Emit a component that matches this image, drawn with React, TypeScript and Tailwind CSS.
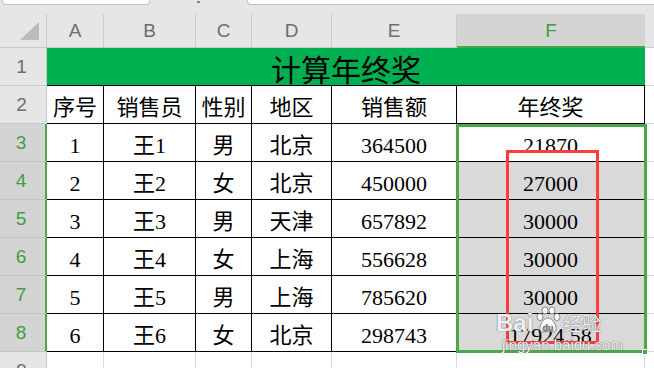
import React from "react";

const COLS = ["A", "B", "C", "D", "E", "F"];
const ROWS: string[][] = [
  ["序号", "销售员", "性别", "地区", "销售额", "年终奖"],
  ["1", "王1", "男", "北京", "364500", "21870"],
  ["2", "王2", "女", "北京", "450000", "27000"],
  ["3", "王3", "男", "天津", "657892", "30000"],
  ["4", "王4", "女", "上海", "556628", "30000"],
  ["5", "王5", "男", "上海", "785620", "30000"],
  ["6", "王6", "女", "北京", "298743", "17924.58"],
];

function RowHead({ n, active }: { n: number; active: boolean }) {
  return (
    <div
      className={
        active
          ? "flex items-center justify-center bg-[#d4d4d4] border-b border-b-[#c4c4c4] border-r-2 border-r-[#4aa84a] text-[#3f9f3f] text-[19px] font-['Liberation_Sans',sans-serif] leading-none pr-[3px]"
          : "flex items-center justify-center bg-[#e6e6e6] border-b border-r border-[#c9c9c9] text-[#6e6e6e] text-[19px] font-['Liberation_Sans',sans-serif] leading-none pr-[3px]"
      }
    >
      {n}
    </div>
  );
}

function ColHead({ label, active }: { label: string; active: boolean }) {
  return (
    <div
      className={
        active
          ? "flex items-center justify-center bg-[#d4d4d4] border-b-2 border-b-[#4aa84a] text-[#3f9f3f] text-[19px] font-['Liberation_Sans',sans-serif] leading-none"
          : "flex items-center justify-center bg-[#e6e6e6] border-r border-b border-[#cbcbcb] text-[#6e6e6e] text-[19px] font-['Liberation_Sans',sans-serif] leading-none"
      }
    >
      {label}
    </div>
  );
}

function DataCell({ text, shaded }: { text: string; shaded: boolean }) {
  return (
    <div
      className={
        shaded
          ? "flex items-center justify-center pt-[6px] bg-[#d9d9d9] border-r border-b border-black text-black text-[22px] leading-none font-['Liberation_Serif','Noto_Sans_CJK_SC',serif]"
          : "flex items-center justify-center pt-[6px] bg-white border-r border-b border-black text-black text-[22px] leading-none font-['Liberation_Serif','Noto_Sans_CJK_SC',serif]"
      }
    >
      {text}
    </div>
  );
}

function Blank() {
  return <div className="bg-white border-r border-b border-[#d9d9d9]" />;
}

function Watermark() {
  return (
    <div className="absolute left-[496px] top-[299px] w-[130px] h-[58px] pointer-events-none select-none text-white/90 [text-shadow:0_0_1px_#6f6f6f,0_0_1px_#6f6f6f]">
      <div className="flex items-end gap-[2px] font-['Liberation_Sans',sans-serif]">
        <span className="text-[24px] font-bold leading-none mt-[12px]">Bai</span>
        <svg width="26" height="28" viewBox="0 0 26 28" className="mb-[1px]">
          <g fill="rgba(255,255,255,0.9)" stroke="rgba(100,100,100,0.8)" strokeWidth="0.9">
            <ellipse cx="5" cy="11" rx="3" ry="3.6" />
            <ellipse cx="10" cy="4.5" rx="3" ry="3.6" />
            <ellipse cx="17" cy="4.5" rx="3" ry="3.6" />
            <ellipse cx="22" cy="11" rx="3" ry="3.6" />
            <path d="M13 12 C8 12 4 20 5 24 C6 27 10 26 13 25 C16 26 20 27 21 24 C22 20 18 12 13 12 Z" />
          </g>
          <text x="13" y="25" textAnchor="middle" fontSize="9" fontWeight="bold" fill="rgba(120,120,120,0.7)" fontFamily="Liberation Sans, sans-serif">du</text>
        </svg>
        <span className="text-[19px] leading-none mb-[3px] font-['Noto_Sans_CJK_SC',sans-serif]">经验</span>
      </div>
      <div className="ml-[6px] mt-[2px] text-[15px] leading-none font-['Liberation_Sans',sans-serif]">jingyan.baidu.com</div>
    </div>
  );
}

export default function App() {
  return (
    <div className="relative w-[654px] h-[368px] overflow-hidden bg-white">
      {/* top strip */}
      <div className="flex h-[14px] bg-[#e6e6e6]">
        <div className="ml-[2px] w-[148px] h-[5px] bg-white border border-t-0 border-[#c4c4c4] rounded-b-[4px]" />
        <div className="w-[97px] flex justify-center">
          <div className="mt-[1px] w-[3px] h-[2px] bg-[#888]" />
        </div>
        <div className="flex-1 h-[5px] bg-white border-l border-b border-[#c4c4c4] rounded-bl-[4px]" />
      </div>

      <div className="grid grid-cols-[47px_57px_92px_56px_80px_125px_188px_1fr] grid-rows-[34px_repeat(9,38px)]">
        {/* corner */}
        <div className="relative bg-[#e6e6e6] border-r border-b border-[#c9c9c9]">
          <div className="absolute right-[7px] bottom-[7px] w-0 h-0 border-l-[19px] border-l-transparent border-b-[18px] border-b-[#bcbcbc]" />
        </div>
        {COLS.map((c) => (
          <ColHead key={c} label={c} active={c === "F"} />
        ))}
        <div className="bg-[#e6e6e6] border-b border-[#cbcbcb]" />

        {/* row 1 */}
        <RowHead n={1} active={false} />
        <div className="col-span-6 flex items-center justify-center pt-[2px] bg-[#00b050] border-b border-black text-black text-[30px] leading-none font-['Noto_Sans_CJK_SC',sans-serif]">
          计算年终奖
        </div>
        <div className="bg-white border-b border-[#d9d9d9]" />

        {ROWS.map((row, ri) => {
          const rowNum = ri + 2;
          return (
            <React.Fragment key={rowNum}>
              <RowHead n={rowNum} active={rowNum >= 3} />
              {row.map((t, ci) => (
                <DataCell key={ci} text={t} shaded={ci === 5 && rowNum >= 4} />
              ))}
              <div className="bg-white border-b border-[#d9d9d9]" />
            </React.Fragment>
          );
        })}

        {/* row 9 */}
        <RowHead n={9} active={false} />
        <Blank />
        <Blank />
        <Blank />
        <Blank />
        <Blank />
        <Blank />
        <div className="bg-white" />
      </div>

      {/* selection border F3:F8 */}
      <div className="absolute left-[456px] top-[124px] w-[191px] h-[229px] border-[3px] border-[#4aa84a] pointer-events-none" />
      <div className="absolute left-[642px] top-[349px] w-[6px] h-[6px] bg-[#4aa84a] border border-white" />

      {/* red annotation rectangle */}
      <div className="absolute left-[506px] top-[150px] w-[93px] h-[194px] border-[3px] border-[#ff3b3b] pointer-events-none" />

      <Watermark />
    </div>
  );
}
